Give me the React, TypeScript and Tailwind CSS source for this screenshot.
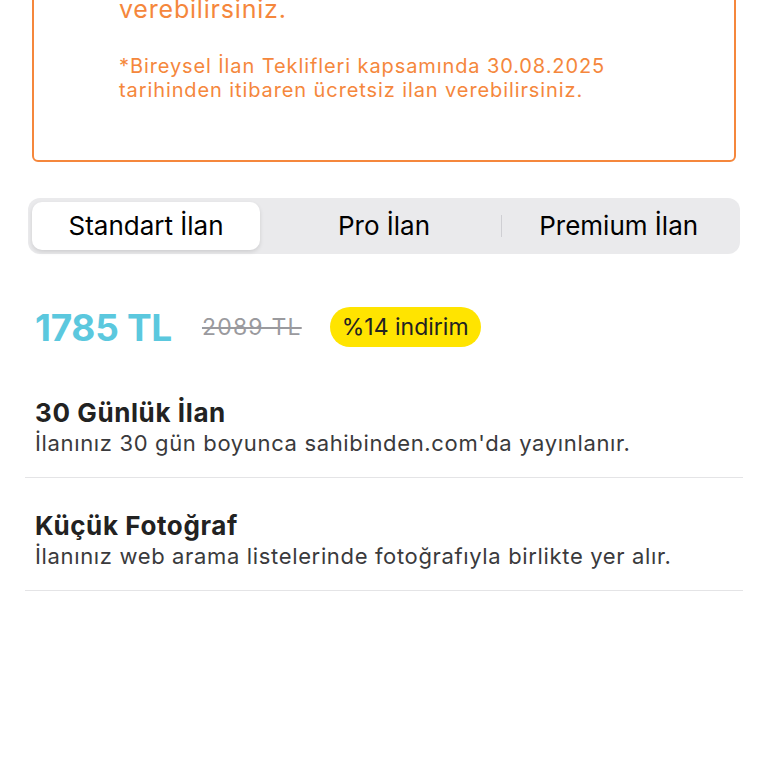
export default function App() {
  const tabs = ['Standart İlan', 'Pro İlan', 'Premium İlan']
  const features = [
    { title: '30 Günlük İlan', desc: "İlanınız 30 gün boyunca sahibinden.com'da yayınlanır." },
    { title: 'Küçük Fotoğraf', desc: 'İlanınız web arama listelerinde fotoğrafıyla birlikte yer alır.' },
  ]

  return (
    <div className="w-[768px] h-[768px] overflow-hidden bg-white font-['Inter',sans-serif]">
      {/* info box, top is scrolled off */}
      <div className="mx-[32px] mt-[-40px] h-[202px] border-2 border-[#f5873c] rounded-b-[6px] pl-[85px] pr-4">
        <div className="pt-[32px] text-[25px] leading-[30px] tracking-[0.8px] text-[#f5873c]">verebilirsiniz.</div>
        <p className="mt-[30px] text-[20px] leading-[24px] tracking-[0.9px] text-[#f5873c]">
          *Bireysel İlan Teklifleri kapsamında 30.08.2025
          <br />
          tarihinden itibaren ücretsiz ilan verebilirsiniz.
        </p>
      </div>

      {/* plan tabs */}
      <div className="mx-[28px] mt-[36px] h-[56px] rounded-[12px] bg-[#eaeaec] p-[4px] flex items-stretch">
        {tabs.map((t, i) => (
          <div key={t} className="flex-1 flex items-center relative">
            {i === 2 && <div className="absolute left-0 top-[13px] bottom-[13px] w-px bg-[#cfcfd3]" />}
            <div
              className={
                i === 0
                  ? 'w-[228px] h-full rounded-[10px] bg-white shadow-[0_2px_4px_rgba(0,0,0,0.12)] flex items-center justify-center'
                  : 'w-full h-full flex items-center justify-center'
              }
            >
              <span className="text-[26px] leading-none text-black">{t}</span>
            </div>
          </div>
        ))}
      </div>

      {/* price */}
      <div className="mt-[53px] h-[40px] px-[35px] flex items-center">
        <span className="text-[37px] leading-none font-bold text-[#5bc8de] tracking-[-0.3px]">1785 TL</span>
        <span className="ml-[30px] text-[23px] leading-none tracking-[1.2px] text-[#9a9a9e] line-through">2089 TL</span>
        <span className="ml-[28px] h-[40px] px-[12px] rounded-full bg-[#ffe400] flex items-center text-[23px] leading-none text-[#222]">
          %14 indirim
        </span>
      </div>

      {/* features */}
      <div className="mt-[51px] mx-[25px]">
        {features.map((f, i) => (
          <div
            key={f.title}
            className={
              i === 0
                ? 'border-b border-[#e4e4e6] pl-[10px] pb-[19px]'
                : 'border-b border-[#e4e4e6] pl-[10px] pt-[33px] pb-[19px]'
            }
          >
            <div className="text-[26px] leading-[30px] font-bold tracking-[0.6px] text-[#222]">{f.title}</div>
            <div className="text-[22px] leading-[30px] tracking-[0.65px] text-[#3a3a3c]">{f.desc}</div>
          </div>
        ))}
      </div>
    </div>
  )
}
